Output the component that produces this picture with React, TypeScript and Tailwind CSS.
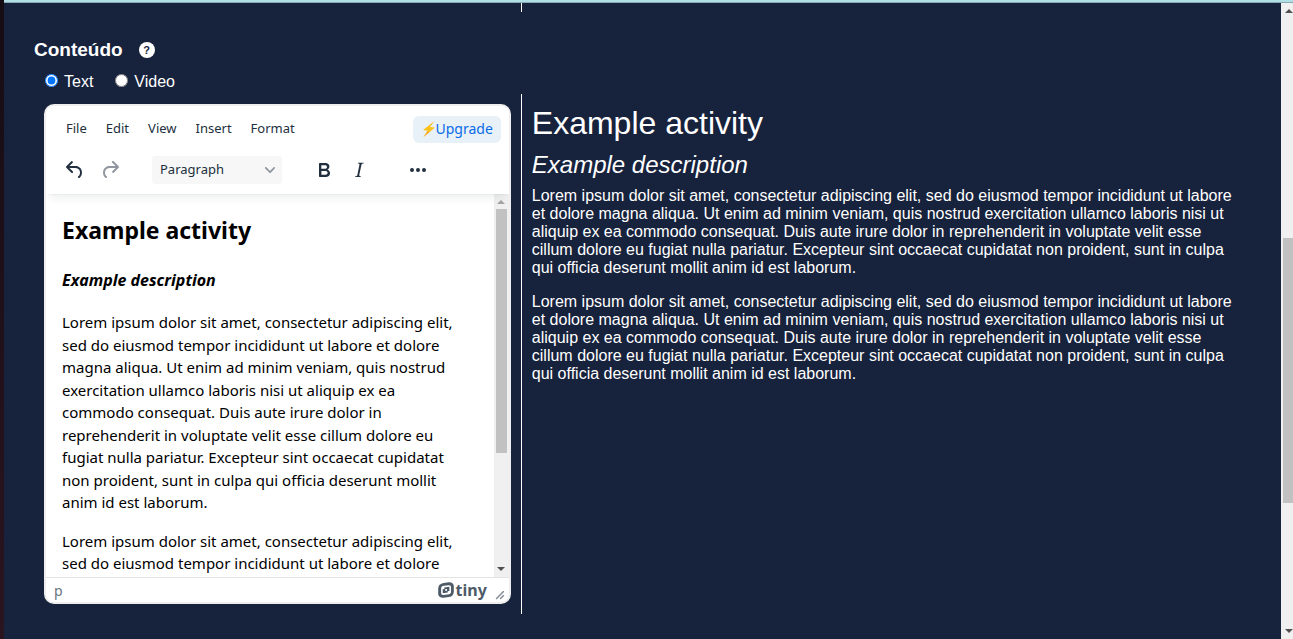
import React from "react";

const LOREM =
  "Lorem ipsum dolor sit amet, consectetur adipiscing elit, sed do eiusmod tempor incididunt ut labore et dolore magna aliqua. Ut enim ad minim veniam, quis nostrud exercitation ullamco laboris nisi ut aliquip ex ea commodo consequat. Duis aute irure dolor in reprehenderit in voluptate velit esse cillum dolore eu fugiat nulla pariatur. Excepteur sint occaecat cupidatat non proident, sunt in culpa qui officia deserunt mollit anim id est laborum.";

const ICONS = {
  undo: "M6.4 8H12c3.7 0 6.2 2 6.8 5.1.6 2.7-.4 5.6-2.3 6.8a1 1 0 0 1-1-1.8c1.1-.6 1.8-2.7 1.4-4.6-.5-2.1-2.1-3.5-4.9-3.5H6.4l3.3 3.3a1 1 0 1 1-1.4 1.4l-5-5a1 1 0 0 1 0-1.4l5-5a1 1 0 0 1 1.4 1.4L6.4 8Z",
  redo: "M17.6 10H12c-2.8 0-4.4 1.4-4.9 3.5-.4 2 .3 4 1.4 4.6a1 1 0 1 1-1 1.8c-2-1.2-2.9-4.1-2.3-6.8.6-3 3-5.1 6.8-5.1h5.6l-3.3-3.3a1 1 0 1 1 1.4-1.4l5 5a1 1 0 0 1 0 1.4l-5 5a1 1 0 0 1-1.4-1.4l3.3-3.3Z",
  bold: "M7.8 19c-.3 0-.5 0-.6-.2l-.2-.5V5.7c0-.2 0-.4.2-.5l.6-.2h5c1.5 0 2.7.3 3.5 1 .7.6 1.1 1.4 1.1 2.5a3 3 0 0 1-.6 1.9c-.4.6-1 1-1.6 1.2.4.1.9.3 1.3.6s.8.7 1 1.2c.4.4.5 1 .5 1.6 0 1.3-.4 2.3-1.3 3-.8.7-2.1 1-3.8 1H7.8Zm5-8.3c.6 0 1.2-.1 1.6-.5.4-.3.6-.7.6-1.3 0-1.1-.8-1.7-2.3-1.7H9.3v3.5h3.4Zm.5 6c.7 0 1.3-.1 1.7-.4.4-.4.6-.9.6-1.5s-.2-1-.7-1.4c-.4-.3-1-.4-2-.4H9.4v3.8h4Z",
  italic:
    "m16.7 4.7-.1.9h-.3c-.6 0-1 0-1.4.3-.3.3-.4.6-.5 1.1l-2.1 9.8v.6c0 .5.4.8 1.4.8h.2l-.2.8H8l.2-.8h.2c1.1 0 1.8-.5 2-1.5l2-9.8.1-.5c0-.6-.4-.8-1.4-.8h-.3l.2-.9h5.8Z",
  more: "M6 10a2 2 0 1 0 0 4 2 2 0 0 0 0-4Zm12 0a2 2 0 1 0 0 4 2 2 0 0 0 0-4Zm-6 0a2 2 0 1 0 0 4 2 2 0 0 0 0-4Z",
};

function ToolButton({ icon, label, disabled = false }: { icon: keyof typeof ICONS; label: string; disabled?: boolean }) {
  return (
    <button
      type="button"
      aria-label={label}
      disabled={disabled}
      className="flex h-7 w-[35px] items-center justify-center text-[#222f3e] disabled:text-[#222f3e]/50"
    >
      <svg viewBox="0 0 24 24" className="size-6 fill-current" fillRule="evenodd">
        <path d={ICONS[icon]} />
      </svg>
    </button>
  );
}

function Arrow({ up = false, className }: { up?: boolean; className: string }) {
  return (
    <svg viewBox="0 0 8 4" className={`h-1 w-2 ${className}`} aria-hidden="true">
      <path d={up ? "M0 4 4 0l4 4Z" : "M0 0h8L4 4Z"} fill="currentColor" />
    </svg>
  );
}

function Editor() {
  return (
    <div className="flex h-[500px] flex-col overflow-hidden rounded-[10px] border-2 border-[#eeeeee] bg-white font-['Noto_Sans',sans-serif] text-[#222f3e]">
      <header className="z-10 flex h-[88px] shrink-0 flex-col bg-white pt-2 shadow-[0_2px_2px_-2px_rgba(34,47,62,0.1),0_8px_8px_-4px_rgba(34,47,62,0.07)]">
        <div className="flex h-[30px] items-center justify-between pr-2 pl-3">
          <div role="menubar" className="flex gap-[3px] text-[13px]">
            {["File", "Edit", "View", "Insert", "Format"].map((item) => (
              <button key={item} type="button" role="menuitem" className="h-7 px-2">
                {item}
              </button>
            ))}
          </div>
          <button
            type="button"
            className="flex h-[27px] items-center rounded-md bg-[#e8f1f8] px-2 text-[14px] leading-5 text-[#086be6]"
          >
            <svg viewBox="0 0 14 16" className="h-4 w-[14px]" aria-hidden="true">
              <path d="M13.500 0 2 9l4.700.7L2.500 16 14 6.500l-5-.6Z" fill="#fcc21b" />
              <path d="M6.700 9.700 2.500 16l6-4.900Z" fill="#f9a825" />
            </svg>
            Upgrade
          </button>
        </div>
        <div role="toolbar" className="mt-[10px] flex h-8 items-center pl-[11px]">
          <ToolButton icon="undo" label="Undo" />
          <ToolButton icon="redo" label="Redo" disabled />
          <div className="relative mr-6 ml-[25px]">
            <select
              aria-label="Block format"
              defaultValue="Paragraph"
              className="h-7 w-[130px] appearance-none rounded-[3px] bg-[#f7f7f7] px-2 text-[13px]"
            >
              <option>Paragraph</option>
              <option>Heading 1</option>
              <option>Heading 2</option>
            </select>
            <svg viewBox="0 0 10 10" className="pointer-events-none absolute top-[9px] right-[7px] size-[10px]">
              <path
                d="M8.7 2.2c.3-.3.8-.3 1 0 .4.4.4.9 0 1.2L5.7 7.8c-.3.3-.9.3-1.2 0L.2 3.4a.8.8 0 0 1 0-1.2c.3-.3.8-.3 1.1 0L5 6l3.7-3.8Z"
                fill="#8b929b"
              />
            </svg>
          </div>
          <ToolButton icon="bold" label="Bold" />
          <ToolButton icon="italic" label="Italic" />
          <div className="ml-6">
            <ToolButton icon="more" label="More" />
          </div>
        </div>
      </header>

      <div className="flex min-h-0 flex-1">
        <div
          role="textbox"
          aria-multiline="true"
          aria-label="Content"
          contentEditable
          suppressContentEditableWarning
          className="min-w-0 flex-1 overflow-y-auto pt-5 pr-8 pl-4 text-[15px] leading-normal text-black [scrollbar-width:none]"
        >
          <h2 className="text-[23px] leading-8 font-bold">Example activity</h2>
          <h3 className="mt-[22px] text-[16px] leading-6 font-bold italic">Example description</h3>
          <p className="mt-[19px]">{LOREM}</p>
          <p className="mt-4">{LOREM}</p>
        </div>
        <div className="flex w-[15px] shrink-0 flex-col items-center justify-between bg-[#f0f0f0] py-[6px]" aria-hidden="true">
          <Arrow up className="text-[#a3a3a3]" />
          <div className="mt-[5px] mb-auto h-[244px] w-[11px] bg-[#c1c1c1]" />
          <Arrow className="text-[#505050]" />
        </div>
      </div>

      <footer className="flex h-[25px] shrink-0 items-center justify-between border-t border-[#e3e3e3] pr-1 pl-2 text-[#222f3e]/70">
        <span className="text-[14px]">p</span>
        <div className="flex items-center gap-2">
          <a href="#tiny" className="flex items-center gap-[2px] text-[16px] leading-5 font-bold text-[#4d5a68]">
            <svg viewBox="0 0 16 16" className="size-4" aria-hidden="true">
              <path
                fill="currentColor"
                d="M5.500.9 11 .2C13.500 0 15.600 1.500 15.800 4v5.500c0 3-1.600 5-4.800 5.600l-5.500.7C2.500 16 .3 14.500.2 12V6.500C.2 3.500 2.200 1.400 5.500.9Z"
              />
              <path
                fill="white"
                fillRule="evenodd"
                d="M5.800 3.800 10.800 3.200C12.200 3 13 3.800 13 5v4.800c0 1.400-.8 2.200-2 2.400l-5.500.7c-1.500.2-2.400-.6-2.400-1.900V6.500c0-1.500 1.100-2.500 2.700-2.700ZM6.300 5.400v1.500l-1.600.3v4l5-.6V9.200l1.700-.3V4.800ZM7.300 7.100l1.700-.2v1.800l-1.700.2Z"
              />
            </svg>
            tiny
          </a>
          <svg viewBox="0 0 10 10" className="size-[10px] self-end opacity-80" aria-hidden="true">
            <path
              d="M8.100 1.100A.5.5 0 1 1 9 2l-7 7A.5.5 0 1 1 1 8l7-7ZM8.100 5.100A.5.5 0 1 1 9 6l-3 3A.5.5 0 1 1 5 8l3-3Z"
              fill="currentColor"
            />
          </svg>
        </div>
      </footer>
    </div>
  );
}

export default function App() {
  return (
    <div className="flex min-h-screen bg-[#17223d] font-['Liberation_Sans',Arial,sans-serif] text-white">
      <div className="w-1 shrink-0 bg-linear-to-b from-[#160c14] to-[#2a1420]" />
      <div className="flex min-w-0 flex-1 flex-col">
        <div className="h-[3px] shrink-0 border-b border-[#86a9b2] bg-[#b0e0e6]" />
        <div className="flex flex-1">
          <main className="min-w-0 flex-1 px-[30px]">
            <div className="grid grid-cols-[2fr_3fr]">
              <div />
              <div className="h-[9px] border-l border-white" />
            </div>

            <section>
              <div className="mt-[26px] flex h-6 items-center gap-4">
                <h3 className="text-[19px] font-bold">Conteúdo</h3>
                <button
                  type="button"
                  aria-label="Help"
                  className="flex size-4 items-center justify-center rounded-full bg-white text-[11px] font-bold text-[#17223d]"
                >
                  ?
                </button>
              </div>
              <div className="mt-2 flex h-6 items-center gap-[22px] pl-[11px] text-[16px]">
                <label className="flex items-center gap-[6px]">
                  <input type="radio" name="kind" defaultChecked className="mb-[3px] size-[13px]" />
                  Text
                </label>
                <label className="flex items-center gap-[6px]">
                  <input type="radio" name="kind" className="mb-[3px] size-[13px]" />
                  Video
                </label>
              </div>

              <div className="grid grid-cols-[2fr_3fr]">
                <div className="p-[10px]">
                  <Editor />
                </div>
                <article className="border-l border-white p-[10px]">
                  <h1 className="text-[32px] leading-[38px]">Example activity</h1>
                  <h2 className="mt-[9px] text-[24px] leading-7 italic">Example description</h2>
                  <p className="mt-2 text-[16px] leading-[18px]">{LOREM}</p>
                  <p className="mt-4 text-[16px] leading-[18px]">{LOREM}</p>
                </article>
              </div>
            </section>
          </main>

          <div className="flex w-3 shrink-0 flex-col items-end bg-[#f0f0f0] py-[6px]" aria-hidden="true">
            <Arrow up className="text-[#505050]" />
            <div className="grow-[225]" />
            <div className="w-[10px] grow-[264] bg-[#c1c1c1]" />
            <div className="grow-[126]" />
            <Arrow className="text-[#505050]" />
          </div>
        </div>
      </div>
    </div>
  );
}
